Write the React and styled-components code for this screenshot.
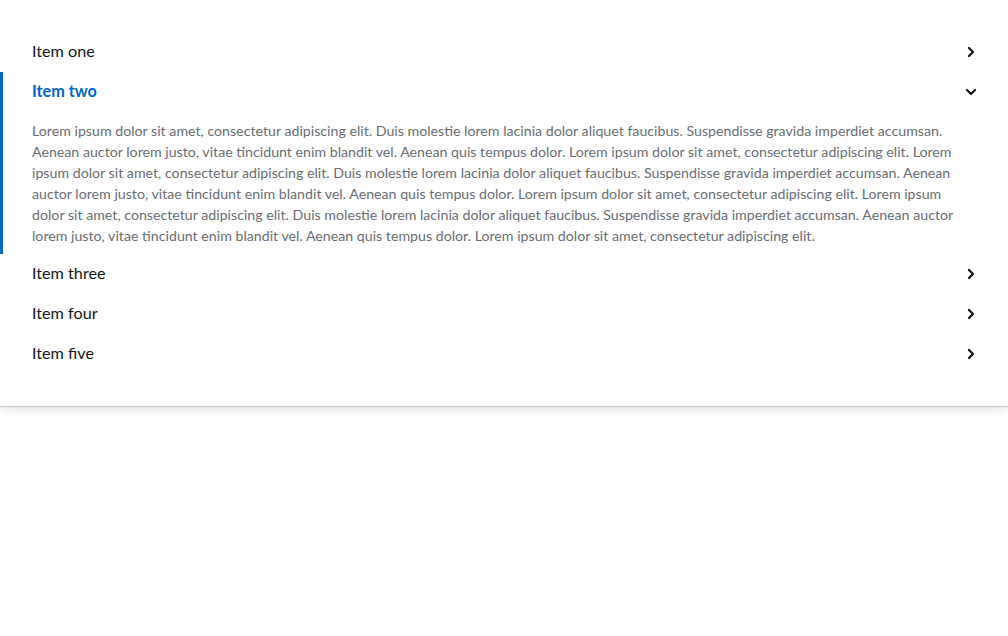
import { useState } from 'react';
import styled, { createGlobalStyle } from 'styled-components';

const GlobalStyle = createGlobalStyle`
  html, body {
    margin: 0;
    padding: 0;
    background: #fff;
  }
  body {
    font-family: Lato, "Open Sans", sans-serif;
  }
`;

const lorem =
  'Lorem ipsum dolor sit amet, consectetur adipiscing elit. Duis molestie lorem lacinia dolor aliquet faucibus. Suspendisse gravida imperdiet accumsan. Aenean auctor lorem justo, vitae tincidunt enim blandit vel. Aenean quis tempus dolor. Lorem ipsum dolor sit amet, consectetur adipiscing elit. Lorem ipsum dolor sit amet, consectetur adipiscing elit. Duis molestie lorem lacinia dolor aliquet faucibus. Suspendisse gravida imperdiet accumsan. Aenean auctor lorem justo, vitae tincidunt enim blandit vel. Aenean quis tempus dolor. Lorem ipsum dolor sit amet, consectetur adipiscing elit. Lorem ipsum dolor sit amet, consectetur adipiscing elit. Duis molestie lorem lacinia dolor aliquet faucibus. Suspendisse gravida imperdiet accumsan. Aenean auctor lorem justo, vitae tincidunt enim blandit vel. Aenean quis tempus dolor. Lorem ipsum dolor sit amet, consectetur adipiscing elit.';

const items = ['Item one', 'Item two', 'Item three', 'Item four', 'Item five'];

const Chevron = ({ open }) => (
  <StIcon viewBox="0 0 10 12" $open={open}>
    <path d="M3 2 L7 6 L3 10" fill="none" stroke="currentColor" strokeWidth="2.3" strokeLinecap="round" strokeLinejoin="round" />
  </StIcon>
);

const App = () => {
  const [open, setOpen] = useState(1);

  return (
    <>
      <GlobalStyle />
      <StPage>
        <StAccordion>
          {items.map((label, i) => {
            const expanded = open === i;
            return (
              <StItem key={label} $expanded={expanded}>
                <StToggle $expanded={expanded} onClick={() => setOpen(expanded ? -1 : i)}>
                  <span>{label}</span>
                  <Chevron open={expanded} />
                </StToggle>
                {expanded && <StBody>{lorem}</StBody>}
              </StItem>
            );
          })}
        </StAccordion>
      </StPage>
    </>
  );
};

export default App;

const StPage = styled.div`
  min-height: 636px;
  background: #fff;
`;

const StAccordion = styled.div`
  position: relative;
  background: #fff;
  padding: 32px 0;
  box-shadow: 0 1px 1px rgba(3, 3, 3, 0.14), 0 4px 10px rgba(3, 3, 3, 0.1);
`;

const StItem = styled.div`
  position: relative;

  &::before {
    content: '';
    position: absolute;
    left: 0;
    top: 0;
    bottom: 0;
    width: 3px;
    background: ${({ $expanded }) => ($expanded ? '#0066cc' : 'transparent')};
  }
`;

const StToggle = styled.button`
  display: flex;
  align-items: center;
  justify-content: space-between;
  width: 100%;
  height: 40px;
  padding: 7px 32px 9px;
  border: none;
  background: transparent;
  font-family: inherit;
  font-size: 16.2px;
  line-height: 24px;
  text-align: left;
  cursor: pointer;
  color: ${({ $expanded }) => ($expanded ? '#0066cc' : '#151515')};
  font-weight: ${({ $expanded }) => ($expanded ? 700 : 400)};
`;

const StIcon = styled.svg`
  width: 10px;
  height: 12px;
  margin-top: 2px;
  color: #151515;
  transform: rotate(${({ $open }) => ($open ? '90deg' : '0deg')});
`;

const StBody = styled.div`
  padding: 8px 40px 8px 32px;
  font-size: 14.2px;
  line-height: 21px;
  color: #6a6e73;
`;
